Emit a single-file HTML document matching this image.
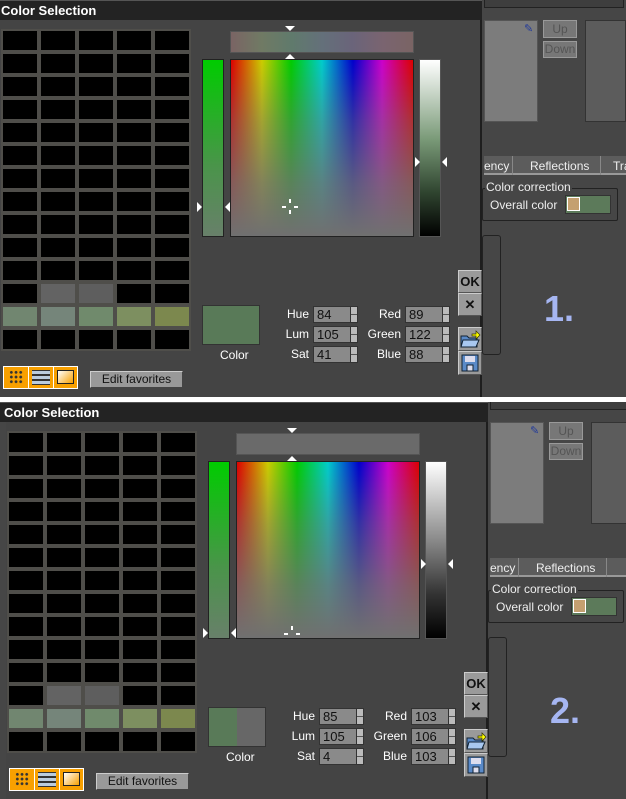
<!DOCTYPE html>
<html><head><meta charset="utf-8">
<style>
*{margin:0;padding:0;box-sizing:border-box}
body{width:626px;height:799px;overflow:hidden;background:#444;font-family:"Liberation Sans",sans-serif;position:relative}
.p{position:absolute;left:0;width:626px;height:398px;overflow:hidden;background:#464646}
.a{position:absolute}
.dlg{position:absolute;left:0;top:0;width:482px;height:398px;background:#444;border-right:2px solid #1e1e1e}
.title{position:absolute;left:0;top:0;width:482px;height:20px;background:#232323;border-top:1px solid #555;color:#fff;font-weight:bold;font-size:13px;line-height:19px;padding-left:1px}
.grid{position:absolute;left:1px;top:29px;width:190px;height:322px;background:
repeating-linear-gradient(90deg,transparent 0 2px,#000 2px 36px,transparent 36px 38px),#4f4e4a;}
.gridh{position:absolute;left:1px;top:29px;width:190px;height:322px;background:repeating-linear-gradient(180deg,#4f4e4a 0 2px,transparent 2px 21px,#4f4e4a 21px 23px)}
.c{position:absolute;width:34px;height:19px}
.lbl{position:absolute;color:#fff;font-size:12px;text-align:right;width:40px}
.in{position:absolute;width:38px;height:17px;background:#8a8a8a;border:1px solid #333;border-right:none;font-size:13px;color:#111;padding-left:3px;line-height:15px}
.sp{position:absolute;width:8px;height:17px;background:#bbb;border:1px solid #333}
.sp:before{content:"";position:absolute;left:0;top:7px;width:6px;height:1px;background:#555}
.btn{position:absolute;left:458px;width:24px;background:#9a9a9a;border:1px solid #ccc;border-right-color:#555;border-bottom-color:#555;text-align:center;font-weight:bold;font-size:13px;color:#111}
.tri{position:absolute;width:0;height:0}
.spec{background:linear-gradient(rgba(112,112,112,0),rgba(112,112,112,.45) 35%,rgba(112,112,112,.8) 70%,rgba(112,112,112,1)),linear-gradient(90deg,#d00,#cc0 17%,#0c0 33%,#0cc 50%,#00c 67%,#c0c 83%,#d00)}
</style></head><body>

<div class="p" style="top:0">
 <div class="a" style="left:484px;top:0;width:140px;height:8px;border:1px solid #222;border-top:none;background:#3e3e3e"></div>
 <div class="a" style="left:484px;top:20px;width:54px;height:102px;background:#7c7c7c;border:1px solid #555"></div>
 <div class="a" style="left:524px;top:22px;color:#223a9a;font-size:11px">&#x270E;</div>
 <div class="a" style="left:543px;top:20px;width:34px;height:18px;background:#777;border:1px solid #999;color:#555;font-size:12px;text-align:center;line-height:16px">Up</div>
 <div class="a" style="left:543px;top:41px;width:34px;height:17px;background:#777;border:1px solid #999;color:#555;font-size:12px;text-align:center;line-height:15px">Down</div>
 <div class="a" style="left:585px;top:20px;width:41px;height:102px;background:#5c5c5c;border:1px solid #333"></div>
 <div class="a" style="left:484px;top:156px;width:142px;height:19px;background:#5c5c5c;border-bottom:2px solid #999"></div>
 <div class="a" style="left:484px;top:159px;color:#eee;font-size:12px">ency</div>
 <div class="a" style="left:512px;top:156px;width:1px;height:19px;background:#888"></div>
 <div class="a" style="left:530px;top:159px;color:#eee;font-size:12px">Reflections</div>
 <div class="a" style="left:600px;top:156px;width:1px;height:19px;background:#888"></div>
 <div class="a" style="left:613px;top:159px;color:#eee;font-size:12px">Tra</div>
 <div class="a" style="left:482px;top:188px;width:136px;height:33px;border:1px solid #222;border-radius:2px"></div>
 <div class="a" style="left:485px;top:180px;color:#eee;font-size:12px;background:#464646;padding:0 1px">Color correction</div>
 <div class="a" style="left:490px;top:198px;color:#eee;font-size:12px">Overall color</div>
 <div class="a" style="left:565px;top:195px;width:46px;height:19px;background:#5c7a5a;border:1px solid #333"></div>
 <div class="a" style="left:567px;top:197px;width:13px;height:14px;background:#c4a070;border:1px solid #fff"></div>
 <div class="a" style="left:482px;top:235px;width:19px;height:120px;border:1px solid #222;border-radius:3px"></div>
 <div class="a" style="left:544px;top:288px;color:#a6b6f2;font-size:36px;font-weight:bold">1.</div>

 <div class="dlg"></div>
 <div class="title">Color Selection</div>
 <div class="grid"></div><div class="gridh"></div>
 <div class="c" style="left:41px;top:284px;background:#636363"></div>
 <div class="c" style="left:79px;top:284px;background:#5e5e5e"></div>
 <div class="c" style="left:3px;top:307px;background:#718670"></div>
 <div class="c" style="left:41px;top:307px;background:#75857a"></div>
 <div class="c" style="left:79px;top:307px;background:#708a6c"></div>
 <div class="c" style="left:117px;top:307px;background:#7d8f60"></div>
 <div class="c" style="left:155px;top:307px;background:#7c884e"></div>

 <div class="a" style="left:3px;top:366px;width:75px;height:23px;background:#f8a000;border:1px solid #fff"></div>
 <div class="a" style="left:28px;top:366px;width:1px;height:23px;background:#fff"></div>
 <div class="a" style="left:53px;top:366px;width:1px;height:23px;background:#fff"></div>
 <div class="a" style="left:9px;top:370px;width:14px;height:14px;background:radial-gradient(circle,#333 1.2px,transparent 1.6px) 0 0/4.7px 4.7px"></div>
 <div class="a" style="left:32px;top:370px;width:18px;height:15px;background:repeating-linear-gradient(#333 0 1px,#bcd 1px 4px,#333 4px 5px)"></div>
 <div class="a" style="left:57px;top:370px;width:17px;height:14px;border:1px solid #222;background:linear-gradient(135deg,#fff,#f8a000)"></div>
 <div class="a" style="left:90px;top:371px;width:93px;height:17px;background:#999;border:1px solid #ccc;border-right-color:#444;border-bottom-color:#444;font-size:12px;text-align:center;line-height:15px;color:#111">Edit favorites</div>

 <div class="a" style="left:230px;top:31px;width:184px;height:22px;border:1px solid #555;background:linear-gradient(90deg,#7a6464,#707a64,#607a6c,#64707a,#6a647a,#7a6470,#7a6464)"></div>
 <div class="tri" style="left:285px;top:26px;border-left:5px solid transparent;border-right:5px solid transparent;border-top:5px solid #fff"></div>
 <div class="tri" style="left:285px;top:54px;border-left:5px solid transparent;border-right:5px solid transparent;border-bottom:5px solid #fff"></div>
 <div class="a" style="left:202px;top:59px;width:22px;height:178px;border:1px solid #222;background:linear-gradient(#00cc00,#4a944a 60%,#68806a)"></div>
 <div class="a spec" style="left:230px;top:59px;width:184px;height:178px;border:1px solid #222"></div>
 <div class="a" style="left:419px;top:59px;width:22px;height:178px;border:1px solid #555;background:linear-gradient(#fff,#7a9a78 45%,#304530 75%,#000)"></div>
 <div class="tri" style="left:197px;top:202px;border-top:5px solid transparent;border-bottom:5px solid transparent;border-left:5px solid #fff"></div>
 <div class="tri" style="left:225px;top:202px;border-top:5px solid transparent;border-bottom:5px solid transparent;border-right:5px solid #fff"></div>
 <div class="tri" style="left:415px;top:157px;border-top:5px solid transparent;border-bottom:5px solid transparent;border-left:5px solid #fff"></div>
 <div class="tri" style="left:442px;top:157px;border-top:5px solid transparent;border-bottom:5px solid transparent;border-right:5px solid #fff"></div>
 <div class="a" style="left:289px;top:199px;width:2px;height:4px;background:#fff"></div>
 <div class="a" style="left:289px;top:210px;width:2px;height:4px;background:#fff"></div>
 <div class="a" style="left:282px;top:206px;width:4px;height:2px;background:#fff"></div>
 <div class="a" style="left:294px;top:206px;width:4px;height:2px;background:#fff"></div>

 <div class="a" style="left:202px;top:305px;width:58px;height:40px;border:1px solid #333;background:#597a58"></div>
 <div class="a" style="left:220px;top:348px;color:#fff;font-size:12px">Color</div>

 <div class="lbl" style="left:269px;top:307px">Hue</div><div class="in" style="left:313px;top:306px">84</div><div class="sp" style="left:350px;top:306px"></div>
 <div class="lbl" style="left:269px;top:327px">Lum</div><div class="in" style="left:313px;top:326px">105</div><div class="sp" style="left:350px;top:326px"></div>
 <div class="lbl" style="left:269px;top:347px">Sat</div><div class="in" style="left:313px;top:346px">41</div><div class="sp" style="left:350px;top:346px"></div>
 <div class="lbl" style="left:361px;top:307px">Red</div><div class="in" style="left:405px;top:306px">89</div><div class="sp" style="left:442px;top:306px"></div>
 <div class="lbl" style="left:361px;top:327px">Green</div><div class="in" style="left:405px;top:326px">122</div><div class="sp" style="left:442px;top:326px"></div>
 <div class="lbl" style="left:361px;top:347px">Blue</div><div class="in" style="left:405px;top:346px">88</div><div class="sp" style="left:442px;top:346px"></div>

 <div class="btn" style="top:270px;height:23px;line-height:21px">OK</div>
 <div class="btn" style="top:293px;height:23px;line-height:21px">✕</div>
 <div class="btn" style="top:327px;height:24px"><svg width="22" height="22" viewBox="0 0 22 22"><path d="M2 8h6l2 2h8v9H2z" fill="#5a8ac8" stroke="#123" /><path d="M4 12h16l-3 7H2z" fill="#a8c8f0" stroke="#123"/><path d="M13 6h4V3l4 4-4 4V8h-4z" fill="#ff0" stroke="#330" stroke-width=".7"/></svg></div>
 <div class="btn" style="top:351px;height:24px"><svg width="20" height="20" viewBox="0 0 20 20" style="margin-top:1px"><rect x="2" y="2" width="16" height="16" fill="#5a8ac8" stroke="#123"/><rect x="5" y="3" width="10" height="6" fill="#dde"/><rect x="7" y="12" width="6" height="6" fill="#dde" stroke="#123"/></svg></div>
</div>

<div class="a" style="left:0;top:397px;width:626px;height:5px;background:#fff"></div>

<div class="p" style="top:402px;height:397px">
<div style="position:absolute;left:6px;top:0;width:626px;height:397px">
 <div class="a" style="left:484px;top:0;width:140px;height:8px;border:1px solid #222;border-top:none;background:#3e3e3e"></div>
 <div class="a" style="left:484px;top:20px;width:54px;height:102px;background:#7c7c7c;border:1px solid #555"></div>
 <div class="a" style="left:524px;top:22px;color:#223a9a;font-size:11px">&#x270E;</div>
 <div class="a" style="left:543px;top:20px;width:34px;height:18px;background:#777;border:1px solid #999;color:#555;font-size:12px;text-align:center;line-height:16px">Up</div>
 <div class="a" style="left:543px;top:41px;width:34px;height:17px;background:#777;border:1px solid #999;color:#555;font-size:12px;text-align:center;line-height:15px">Down</div>
 <div class="a" style="left:585px;top:20px;width:41px;height:102px;background:#5c5c5c;border:1px solid #333"></div>
 <div class="a" style="left:484px;top:156px;width:142px;height:19px;background:#5c5c5c;border-bottom:2px solid #999"></div>
 <div class="a" style="left:484px;top:159px;color:#eee;font-size:12px">ency</div>
 <div class="a" style="left:512px;top:156px;width:1px;height:19px;background:#888"></div>
 <div class="a" style="left:530px;top:159px;color:#eee;font-size:12px">Reflections</div>
 <div class="a" style="left:600px;top:156px;width:1px;height:19px;background:#888"></div>
 <div class="a" style="left:482px;top:188px;width:136px;height:33px;border:1px solid #222;border-radius:2px"></div>
 <div class="a" style="left:485px;top:180px;color:#eee;font-size:12px;background:#464646;padding:0 1px">Color correction</div>
 <div class="a" style="left:490px;top:198px;color:#eee;font-size:12px">Overall color</div>
 <div class="a" style="left:565px;top:195px;width:46px;height:19px;background:#5c7a5a;border:1px solid #333"></div>
 <div class="a" style="left:567px;top:197px;width:13px;height:14px;background:#c4a070;border:1px solid #fff"></div>
 <div class="a" style="left:482px;top:235px;width:19px;height:120px;border:1px solid #222;border-radius:3px"></div>
 <div class="a" style="left:544px;top:288px;color:#a6b6f2;font-size:36px;font-weight:bold">2.</div>

 <div class="dlg"></div>
 <div class="title" style="left:-6px;width:488px;padding-left:4px">Color Selection</div>
 <div class="grid"></div><div class="gridh"></div>
 <div class="c" style="left:41px;top:284px;background:#636363"></div>
 <div class="c" style="left:79px;top:284px;background:#5e5e5e"></div>
 <div class="c" style="left:3px;top:307px;background:#718670"></div>
 <div class="c" style="left:41px;top:307px;background:#75857a"></div>
 <div class="c" style="left:79px;top:307px;background:#708a6c"></div>
 <div class="c" style="left:117px;top:307px;background:#7d8f60"></div>
 <div class="c" style="left:155px;top:307px;background:#7c884e"></div>

 <div class="a" style="left:3px;top:366px;width:75px;height:23px;background:#f8a000;border:1px solid #fff"></div>
 <div class="a" style="left:28px;top:366px;width:1px;height:23px;background:#fff"></div>
 <div class="a" style="left:53px;top:366px;width:1px;height:23px;background:#fff"></div>
 <div class="a" style="left:9px;top:370px;width:14px;height:14px;background:radial-gradient(circle,#333 1.2px,transparent 1.6px) 0 0/4.7px 4.7px"></div>
 <div class="a" style="left:32px;top:370px;width:18px;height:15px;background:repeating-linear-gradient(#333 0 1px,#bcd 1px 4px,#333 4px 5px)"></div>
 <div class="a" style="left:57px;top:370px;width:17px;height:14px;border:1px solid #222;background:linear-gradient(135deg,#fff,#f8a000)"></div>
 <div class="a" style="left:90px;top:371px;width:93px;height:17px;background:#999;border:1px solid #ccc;border-right-color:#444;border-bottom-color:#444;font-size:12px;text-align:center;line-height:15px;color:#111">Edit favorites</div>

 <div class="a" style="left:230px;top:31px;width:184px;height:22px;border:1px solid #555;background:#6a6a6a"></div>
 <div class="tri" style="left:281px;top:26px;border-left:5px solid transparent;border-right:5px solid transparent;border-top:5px solid #fff"></div>
 <div class="tri" style="left:281px;top:54px;border-left:5px solid transparent;border-right:5px solid transparent;border-bottom:5px solid #fff"></div>
 <div class="a" style="left:202px;top:59px;width:22px;height:178px;border:1px solid #222;background:linear-gradient(#00cc00,#4a944a 60%,#68806a)"></div>
 <div class="a spec" style="left:230px;top:59px;width:184px;height:178px;border:1px solid #222"></div>
 <div class="a" style="left:419px;top:59px;width:22px;height:178px;border:1px solid #555;background:linear-gradient(#fff,#888 45%,#333 75%,#000)"></div>
 <div class="tri" style="left:197px;top:226px;border-top:5px solid transparent;border-bottom:5px solid transparent;border-left:5px solid #fff"></div>
 <div class="tri" style="left:225px;top:226px;border-top:5px solid transparent;border-bottom:5px solid transparent;border-right:5px solid #fff"></div>
 <div class="tri" style="left:415px;top:157px;border-top:5px solid transparent;border-bottom:5px solid transparent;border-left:5px solid #fff"></div>
 <div class="tri" style="left:442px;top:157px;border-top:5px solid transparent;border-bottom:5px solid transparent;border-right:5px solid #fff"></div>
 <div class="a" style="left:285px;top:224px;width:2px;height:4px;background:#fff"></div>
 <div class="a" style="left:278px;top:231px;width:4px;height:2px;background:#fff"></div>
 <div class="a" style="left:290px;top:231px;width:4px;height:2px;background:#fff"></div>

 <div class="a" style="left:202px;top:305px;width:58px;height:40px;border:1px solid #333;background:linear-gradient(90deg,#597a58 50%,#676767 50%)"></div>
 <div class="a" style="left:220px;top:348px;color:#fff;font-size:12px">Color</div>

 <div class="lbl" style="left:269px;top:307px">Hue</div><div class="in" style="left:313px;top:306px">85</div><div class="sp" style="left:350px;top:306px"></div>
 <div class="lbl" style="left:269px;top:327px">Lum</div><div class="in" style="left:313px;top:326px">105</div><div class="sp" style="left:350px;top:326px"></div>
 <div class="lbl" style="left:269px;top:347px">Sat</div><div class="in" style="left:313px;top:346px">4</div><div class="sp" style="left:350px;top:346px"></div>
 <div class="lbl" style="left:361px;top:307px">Red</div><div class="in" style="left:405px;top:306px">103</div><div class="sp" style="left:442px;top:306px"></div>
 <div class="lbl" style="left:361px;top:327px">Green</div><div class="in" style="left:405px;top:326px">106</div><div class="sp" style="left:442px;top:326px"></div>
 <div class="lbl" style="left:361px;top:347px">Blue</div><div class="in" style="left:405px;top:346px">103</div><div class="sp" style="left:442px;top:346px"></div>

 <div class="btn" style="top:270px;height:23px;line-height:21px">OK</div>
 <div class="btn" style="top:293px;height:23px;line-height:21px">✕</div>
 <div class="btn" style="top:327px;height:24px"><svg width="22" height="22" viewBox="0 0 22 22"><path d="M2 8h6l2 2h8v9H2z" fill="#5a8ac8" stroke="#123" /><path d="M4 12h16l-3 7H2z" fill="#a8c8f0" stroke="#123"/><path d="M13 6h4V3l4 4-4 4V8h-4z" fill="#ff0" stroke="#330" stroke-width=".7"/></svg></div>
 <div class="btn" style="top:351px;height:24px"><svg width="20" height="20" viewBox="0 0 20 20" style="margin-top:1px"><rect x="2" y="2" width="16" height="16" fill="#5a8ac8" stroke="#123"/><rect x="5" y="3" width="10" height="6" fill="#dde"/><rect x="7" y="12" width="6" height="6" fill="#dde" stroke="#123"/></svg></div>
</div>
</div>
</body></html>
